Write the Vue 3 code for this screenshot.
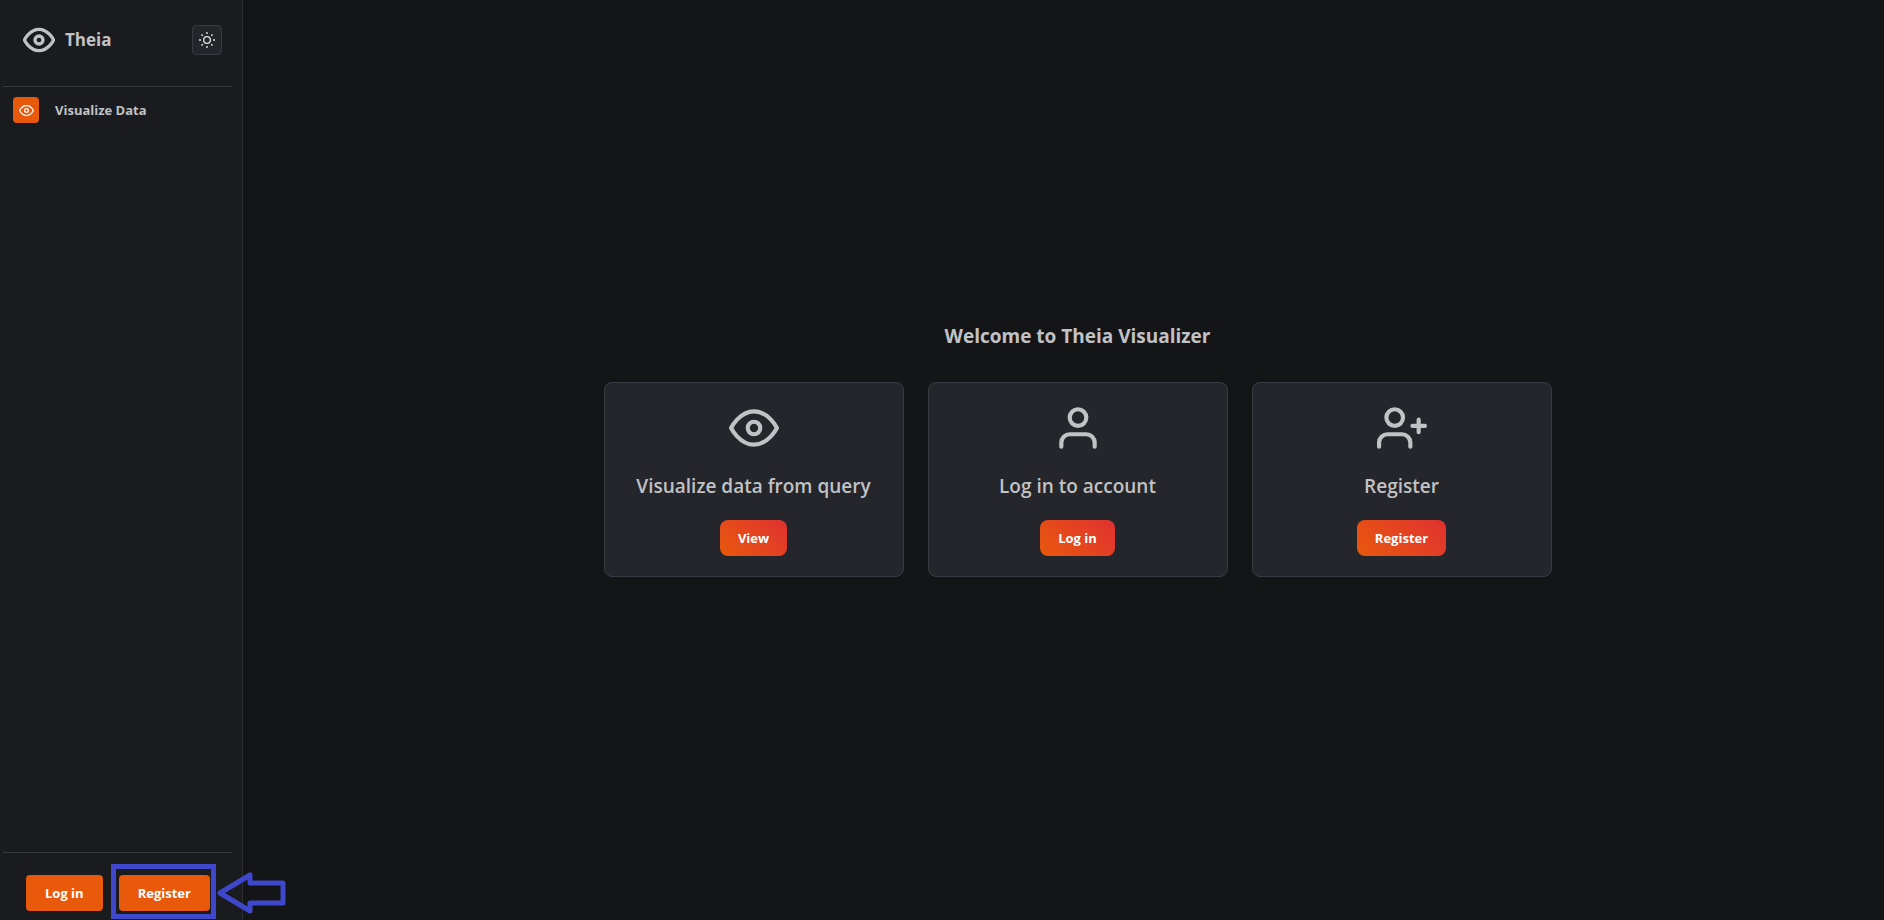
<script setup>
const actions = [
  { title: 'Visualize data from query', label: 'View', icon: 'eye' },
  { title: 'Log in to account', label: 'Log in', icon: 'user' },
  { title: 'Register', label: 'Register', icon: 'user-plus' },
]
</script>

<template>
  <div class="shell">
    <aside class="sidebar">
      <header class="brand">
        <svg class="brand-icon" viewBox="0 0 24 24" aria-hidden="true">
          <path d="M1 12s4-8 11-8 11 8 11 8-4 8-11 8-11-8-11-8z" />
          <circle cx="12" cy="12" r="3" />
        </svg>
        <span class="brand-name">Theia</span>
        <button class="theme-toggle" type="button" aria-label="Toggle color scheme">
          <svg class="sun" viewBox="0 0 24 24" aria-hidden="true">
            <circle cx="12" cy="12" r="5" />
            <path d="M12 0v3M12 21v3M3.7 3.7l2 2M18.3 18.3l2 2M0 12h3M21 12h3M3.7 20.3l2-2M18.3 5.7l2-2" />
          </svg>
        </button>
      </header>
      <nav class="nav">
        <a class="nav-link" href="#visualize">
          <span class="nav-icon">
            <svg viewBox="0 0 24 24" aria-hidden="true">
              <path d="M1 12s4-8 11-8 11 8 11 8-4 8-11 8-11-8-11-8z" />
              <circle cx="12" cy="12" r="3" />
            </svg>
          </span>
          <span>Visualize Data</span>
        </a>
      </nav>
      <footer class="account">
        <button class="button login" type="button">Log in</button>
        <div class="highlight">
          <button class="button" type="button">Register</button>
          <svg class="arrow" viewBox="0 0 74 44" aria-hidden="true">
            <path d="M5 22L35 4V12H68V32H35V40Z" />
          </svg>
        </div>
      </footer>
    </aside>
    <main class="main">
      <h1 class="title">Welcome to Theia Visualizer</h1>
      <div class="cards">
        <section v-for="action in actions" :key="action.title" class="card">
          <svg class="card-icon" viewBox="0 0 24 24" aria-hidden="true">
            <template v-if="action.icon === 'eye'">
              <path d="M1 12s4-8 11-8 11 8 11 8-4 8-11 8-11-8-11-8z" />
              <circle cx="12" cy="12" r="3" />
            </template>
            <template v-else-if="action.icon === 'user'">
              <path d="M20 21v-2a4 4 0 0 0-4-4H8a4 4 0 0 0-4 4v2" />
              <circle cx="12" cy="7" r="4" />
            </template>
            <template v-else>
              <path d="M16 21v-2a4 4 0 0 0-4-4H5a4 4 0 0 0-4 4v2M20 8v6M23 11h-6" />
              <circle cx="8.5" cy="7" r="4" />
            </template>
          </svg>
          <h2 class="card-title">{{ action.title }}</h2>
          <button class="button gradient" type="button">{{ action.label }}</button>
        </section>
      </div>
    </main>
  </div>
</template>

<style>
body {
  margin: 0;
  background: #141517;
}
</style>

<style scoped>
.shell {
  display: flex;
  min-height: 100vh;
  background: #141517;
  color: #c1c2c5;
  font-family: "Segoe UI", "Open Sans", "Noto Sans", sans-serif;
}

svg {
  display: block;
  fill: none;
  stroke: currentColor;
  stroke-width: 2;
  stroke-linecap: round;
  stroke-linejoin: round;
}

.sidebar {
  box-sizing: border-box;
  display: flex;
  flex: none;
  flex-direction: column;
  width: 243px;
  padding: 0 10px 0 3px;
  border-right: 1px solid #2c2e33;
  background: #1a1b1e;
}

.brand {
  display: flex;
  align-items: center;
  height: 80px;
  padding: 0 10px 6px 20px;
  border-bottom: 1px solid #373a40;
}

.brand-icon {
  width: 32px;
  height: 32px;
  stroke-width: 2.5;
}

.brand-name {
  flex: 1;
  margin-left: 10px;
  font-size: 17px;
  font-weight: 700;
  line-height: 24px;
}

.theme-toggle {
  display: flex;
  align-items: center;
  justify-content: center;
  box-sizing: border-box;
  width: 30px;
  height: 30px;
  padding: 0;
  border: 1px solid #373a40;
  border-radius: 4px;
  background: #25262b;
  color: #e4e5e7;
}

.sun {
  width: 16px;
  height: 16px;
  stroke-linecap: butt;
}

.nav {
  flex: 1;
  padding: 10px;
}

.nav-link {
  display: flex;
  align-items: center;
  gap: 16px;
  color: inherit;
  font-size: 13px;
  font-weight: 700;
  text-decoration: none;
}

.nav-icon {
  display: flex;
  align-items: center;
  justify-content: center;
  width: 26px;
  height: 26px;
  border-radius: 4px;
  background: #e8590c;
  color: #fff;
}

.nav-icon svg {
  width: 15px;
  height: 15px;
}

.account {
  display: flex;
  align-items: flex-end;
  gap: 8px;
  padding: 11px 0 1px 23px;
  border-top: 1px solid #373a40;
}

.button {
  height: 36px;
  padding: 0 18px;
  border: 0;
  border-radius: 4px;
  background: #e8590c;
  color: #fff;
  font-family: inherit;
  font-size: 13px;
  font-weight: 700;
  line-height: 36px;
  white-space: nowrap;
}

.account .button {
  padding: 0 19px;
}

.login {
  margin-bottom: 8px;
}

.highlight {
  position: relative;
  padding: 6px 1px 3px 3px;
  border: 5px solid #3f48cc;
}

.highlight .button {
  display: block;
}

.arrow {
  position: absolute;
  top: 2px;
  left: 100%;
  width: 74px;
  height: 44px;
  margin-left: 4px;
  stroke: #3f48cc;
  stroke-width: 5;
}

.main {
  display: flex;
  flex: 1;
  flex-direction: column;
  align-items: center;
  justify-content: center;
  gap: 32px;
  padding: 0 0 22px 28px;
}

.title {
  margin: 0;
  font-size: 19px;
  font-weight: 700;
  line-height: 28px;
}

.cards {
  display: flex;
  flex-wrap: wrap;
  justify-content: center;
  gap: 24px;
}

.card {
  display: flex;
  flex-direction: column;
  align-items: center;
  box-sizing: border-box;
  width: 300px;
  padding: 20px;
  border: 1px solid #373a40;
  border-radius: 8px;
  background: #25262b;
}

.card-icon {
  width: 50px;
  height: 50px;
}

.card-title {
  margin: 18px 0;
  font-size: 19px;
  font-weight: 600;
  line-height: 31px;
  white-space: nowrap;
}

.gradient {
  border-radius: 8px;
  background: linear-gradient(45deg, #e8590c 0%, #e03131 100%);
}
</style>
